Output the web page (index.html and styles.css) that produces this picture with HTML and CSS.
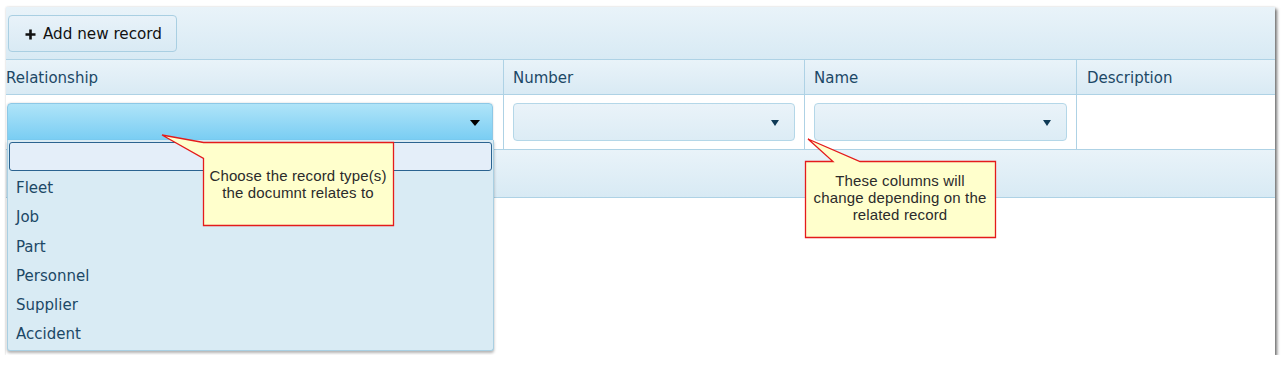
FILE: index.html
```html
<!DOCTYPE html>
<html lang="en">
<head>
  <meta charset="UTF-8">
  <title>Related records</title>
  <link rel="stylesheet" href="styles.css">
</head>
<body>

<div class="frame">
  <div class="toolbar">
    <button class="add-btn" type="button">
      <svg class="plus" width="11" height="11" viewBox="0 0 11 11"><path d="M5.5 0.5v10M0.5 5.5h10" stroke="#111" stroke-width="2.6"/></svg>
      Add new record
    </button>
  </div>

  <div class="grid head">
    <div class="cell first">Relationship</div>
    <div class="cell">Number</div>
    <div class="cell">Name</div>
    <div class="cell last">Description</div>
  </div>

  <div class="grid row">
    <div class="cell first">
      <div class="select open"><span class="arrow"></span></div>
    </div>
    <div class="cell">
      <div class="select"><span class="arrow"></span></div>
    </div>
    <div class="cell">
      <div class="select"><span class="arrow"></span></div>
    </div>
    <div class="cell last"></div>
  </div>

  <div class="footer-bar"></div>

  <div class="popup">
    <div class="search"></div>
    <ul class="options">
      <li>Fleet</li>
      <li>Job</li>
      <li>Part</li>
      <li>Personnel</li>
      <li>Supplier</li>
      <li>Accident</li>
    </ul>
  </div>

  <svg class="callout-shape one" width="240" height="96" viewBox="0 0 240 96">
    <path d="M47.5 10.5 L237.5 10.5 L237.5 93.5 L47.5 93.5 L47.5 26.5 L6 3 Z" fill="#ffffcc" stroke="#e41b1b" stroke-width="1.3"/>
  </svg>
  <div class="callout-text one">Choose the record type(s)<br>the documnt relates to</div>

  <svg class="callout-shape two" width="200" height="108" viewBox="0 0 200 108">
    <path d="M4.5 26.5 L32 26.5 L7 4 L59 26.5 L194.5 26.5 L194.5 102.5 L4.5 102.5 Z" fill="#ffffcc" stroke="#e41b1b" stroke-width="1.3"/>
  </svg>
  <div class="callout-text two">These columns will<br>change depending on the<br>related record</div>
</div>

</body>
</html>
```

FILE: styles.css
```css
body {
  margin: 0;
  background: #fff;
  font-family: "DejaVu Sans", Verdana, sans-serif;
}
.frame {
  position: relative;
  margin: 7px 0 0 6px;
  width: 1269px;
  height: 348px;
  background: #fff;
  box-shadow: 2px 2px 3px rgba(0, 0, 0, 0.55), 0 0 2px rgba(0, 0, 0, 0.12);
}
.toolbar {
  height: 53px;
  box-sizing: border-box;
  padding: 8px 2px;
  background: linear-gradient(#e9f3f9, #d8eaf4);
  border-bottom: 1px solid #aed2e5;
}
.add-btn {
  display: flex;
  align-items: center;
  gap: 7px;
  width: 169px;
  height: 37px;
  padding: 0 0 0 16px;
  margin: 0;
  border: 1px solid #a9cfe2;
  border-radius: 4px;
  background: linear-gradient(#e8f2f9, #d9eaf4);
  font-family: "DejaVu Sans", Verdana, sans-serif;
  font-size: 15.2px;
  color: #111;
}
.plus {
  margin-top: 1px;
}
.grid {
  display: grid;
  grid-template-columns: 498px 301px 272px 198px;
}
.cell {
  box-sizing: border-box;
  border-right: 1px solid #aed2e5;
}
.cell.last {
  border-right: none;
}
.head {
  height: 35px;
  background: linear-gradient(#e9f3f9, #d9eaf4);
  border-bottom: 1px solid #aed2e5;
  box-sizing: border-box;
  font-size: 15px;
  color: #1c4866;
}
.head .cell {
  display: flex;
  align-items: center;
  padding: 2px 0 0 9px;
}
.head .cell.first {
  padding-left: 0;
}
.head .cell.last {
  padding-left: 10px;
}
.row {
  height: 55px;
  box-sizing: border-box;
  border-bottom: 1px solid #aed2e5;
}
.row .cell {
  padding: 8px 9px;
}
.select {
  position: relative;
  height: 38px;
  box-sizing: border-box;
  border: 1px solid #b4d7e8;
  border-radius: 4px;
  background: linear-gradient(#eaf3f9, #dcecf5);
}
.arrow {
  position: absolute;
  right: 15px;
  top: 16px;
  border-left: 4.5px solid transparent;
  border-right: 4.5px solid transparent;
  border-top: 6px solid #0f3a56;
}
.row .cell.first {
  padding: 8px 10px 0 1px;
}
.select.open {
  border-color: #8cc8e6;
  border-radius: 4px 4px 0 0;
  background: linear-gradient(#afe4f8, #79cdf3);
  box-shadow: 0 0 2px rgba(0, 0, 0, 0.2);
}
.select.open .arrow {
  right: 12px;
  border-left-width: 5px;
  border-right-width: 5px;
  border-top-color: #000;
}
.footer-bar {
  height: 48px;
  box-sizing: border-box;
  background: linear-gradient(#e9f3f9, #d8eaf4);
  border-bottom: 1px solid #aed2e5;
}
.popup {
  position: absolute;
  left: 1px;
  top: 133px;
  width: 487px;
  height: 211px;
  box-sizing: border-box;
  padding: 2px 1px 0;
  background: #d9ebf4;
  border: 1px solid #a9cfe2;
  border-top: none;
  border-radius: 0 0 3px 3px;
  box-shadow: 0 2px 3px rgba(0, 0, 0, 0.3);
  z-index: 2;
}
.search {
  height: 29px;
  box-sizing: border-box;
  background: #e4eef9;
  border: 1px solid #2b6390;
  border-radius: 3px;
}
.options {
  list-style: none;
  margin: 3px 0 0;
  padding: 0;
}
.options li {
  height: 29.3px;
  line-height: 29.3px;
  padding-left: 7px;
  font-size: 15px;
  color: #1c4866;
}
.callout-shape {
  position: absolute;
  z-index: 3;
}
.callout-shape.one {
  left: 150px;
  top: 125px;
}
.callout-shape.two {
  left: 795px;
  top: 128px;
}
.callout-text {
  position: absolute;
  z-index: 4;
  width: 190px;
  text-align: center;
  font-family: "Liberation Sans", Arial, sans-serif;
  font-size: 15px;
  letter-spacing: 0.15px;
  line-height: 17px;
  color: #2b2b2b;
}
.callout-text.one {
  left: 197px;
  top: 160px;
}
.callout-text.two {
  left: 799px;
  top: 165px;
}
```
